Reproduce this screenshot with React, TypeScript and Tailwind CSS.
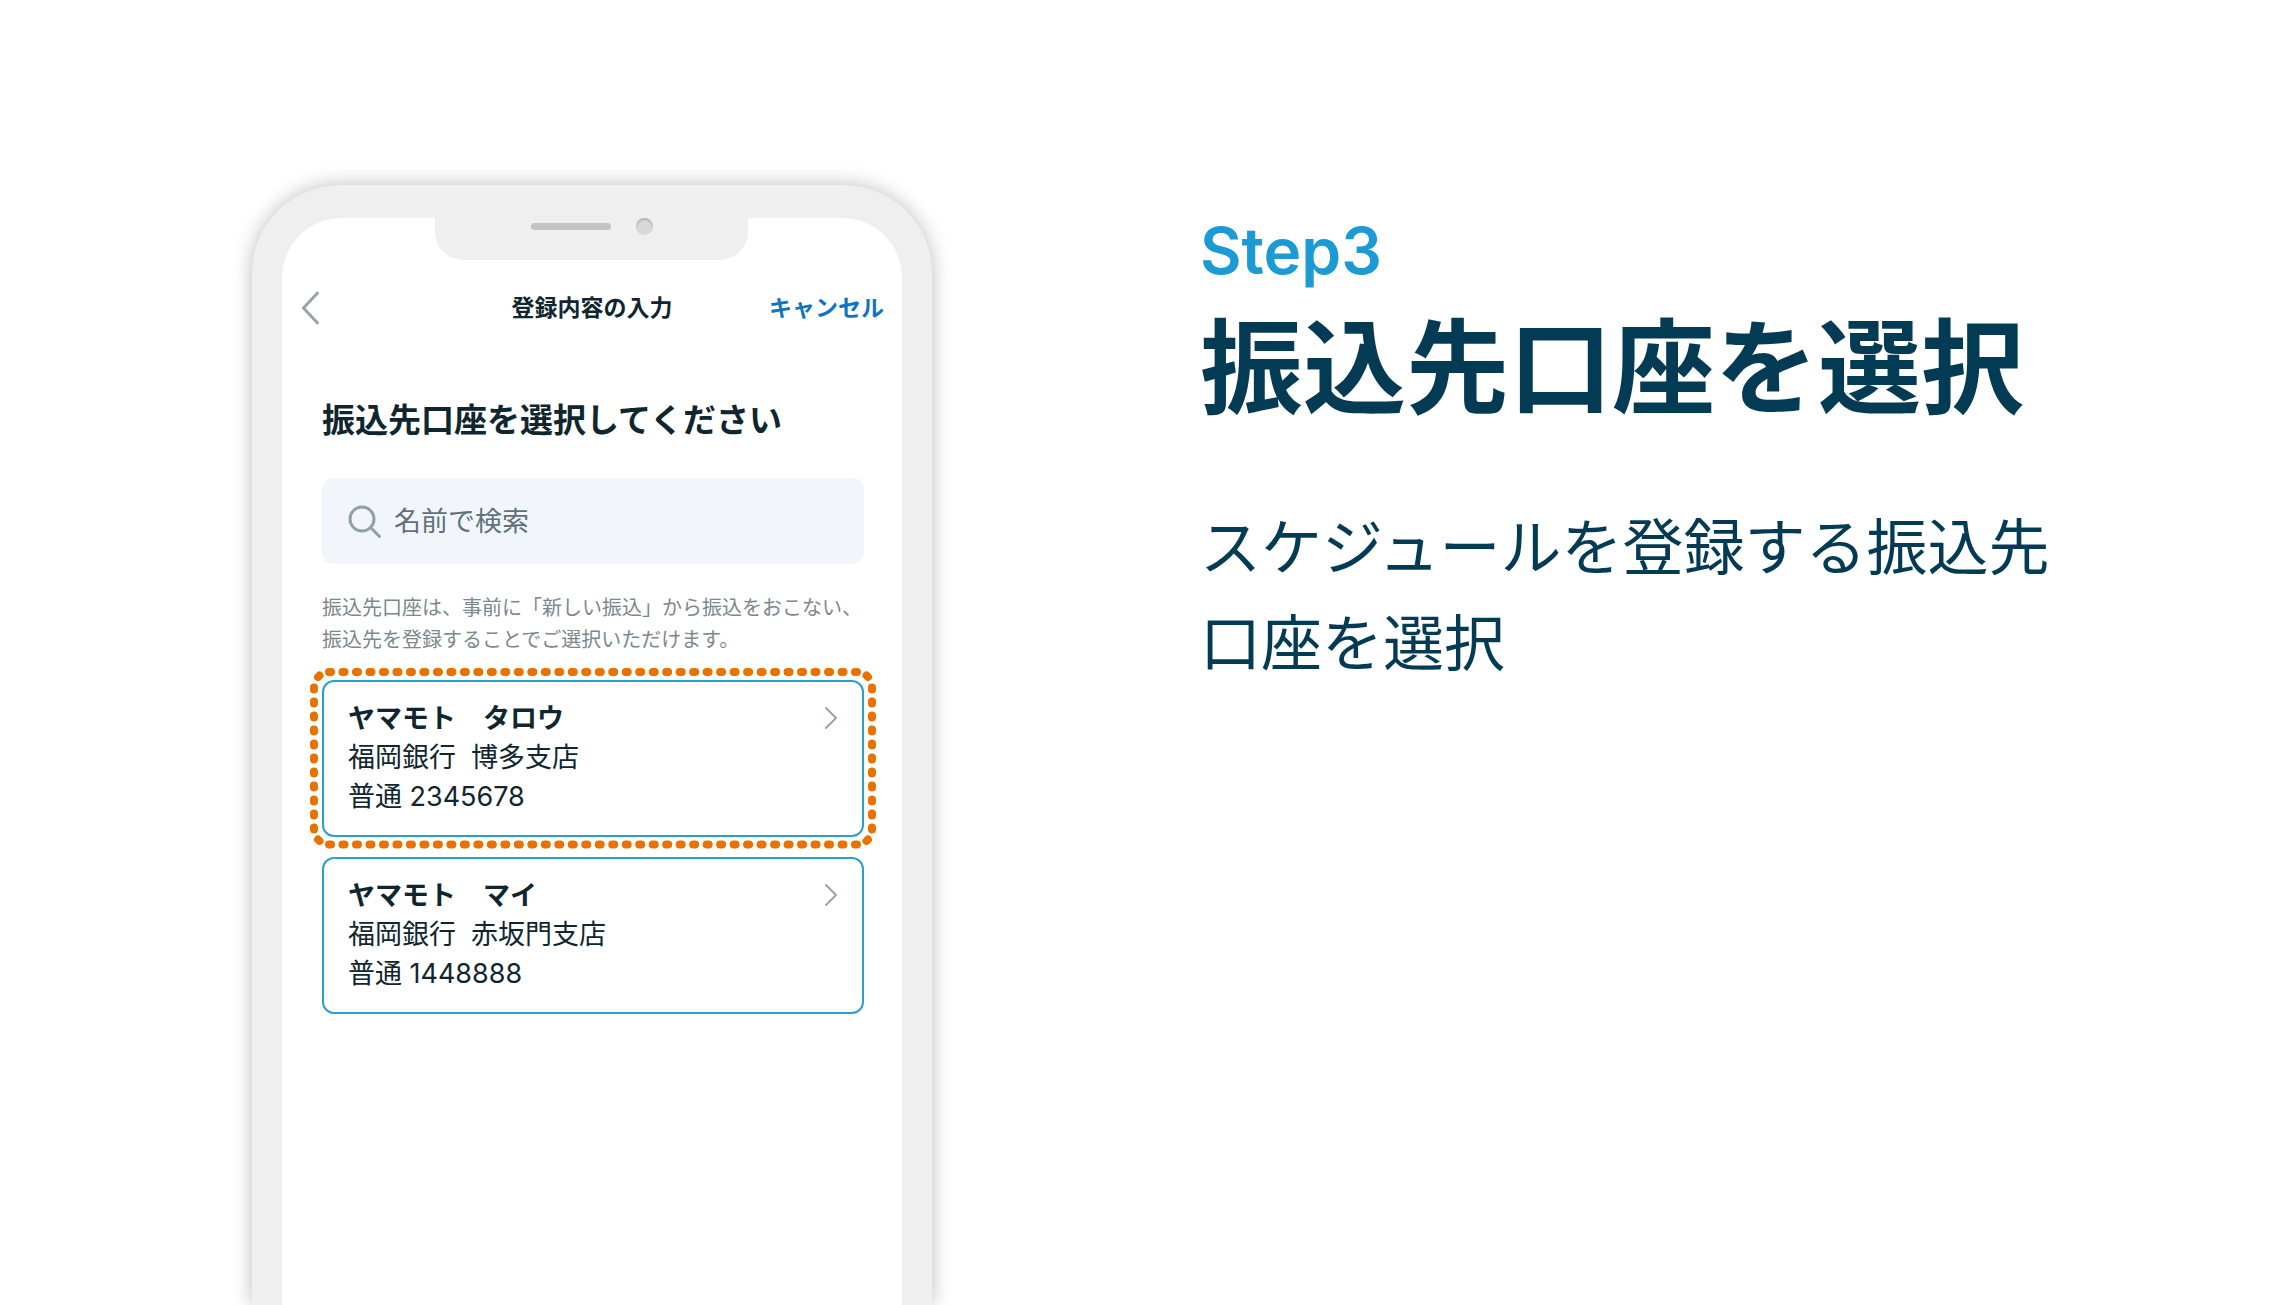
const accounts = [
  {
    id: 1,
    name: "ヤマモト　タロウ",
    bank: "福岡銀行",
    branch: "博多支店",
    number: "2345678",
    highlighted: true,
  },
  {
    id: 2,
    name: "ヤマモト　マイ",
    bank: "福岡銀行",
    branch: "赤坂門支店",
    number: "1448888",
    highlighted: false,
  },
];

const Highlight = () => (
  <svg
    className="pointer-events-none absolute -inset-x-[12px] -inset-y-[12px] h-[181px] w-[566px]"
    viewBox="0 0 566 181"
    fill="none"
    stroke="#e87200"
    strokeWidth="8"
    strokeLinecap="round"
  >
    <path d="M19 4H548" strokeDasharray="2 11.487" />
    <path d="M19 176.500H548" strokeDasharray="2 11.487" />
    <path d="M4 19.500V162" strokeDasharray="2 12" />
    <path d="M562 19.500V162" strokeDasharray="2 12" />
    <path d="M8 9L9.500 7.500M556.500 7.500L558 9M8 171.500L9.500 173M556.500 173L558 171.500" />
  </svg>
);

const AccountCard = ({ account }: { account: (typeof accounts)[number] }) => (
  <li className="relative">
    {account.highlighted && <Highlight />}
    <button
      type="button"
      className="flex w-full items-start justify-between rounded-xl border-2 border-[#2a9fd3] pt-[17px] pr-[24px] pb-[19px] pl-[24px] text-left text-[27px] leading-[39px]"
    >
      <span>
        <span className="block font-bold">{account.name}</span>
        <span className="block whitespace-pre">
          {account.bank}
          {"  "}
          {account.branch}
        </span>
        <span className="block">普通 {account.number}</span>
      </span>
      <svg
        className="mt-[7px] h-[24px] w-[14px]"
        viewBox="0 0 14 24"
        fill="none"
        stroke="#98a4ab"
        strokeWidth="2"
        strokeLinecap="round"
        strokeLinejoin="round"
      >
        <path d="M2 2L12 12L2 22" />
      </svg>
    </button>
  </li>
);

const Phone = () => (
  <div className="w-[680px] shrink-0 rounded-t-[88px] bg-[#efefef] px-[30px] pt-[33px] shadow-[0_0_20px_rgba(0,0,0,0.26)]">
    <div className="h-full rounded-t-[60px] bg-white text-[#10262f]">
      <div className="mx-auto flex h-[42px] w-[313px] justify-center rounded-b-[28px] bg-[#efefef]">
        <div className="flex h-[17px] items-center gap-[25px]">
          <span className="h-[7px] w-[80px] rounded-full bg-[#c4c4c4]" />
          <span className="size-[17px] rounded-full bg-[#d8d8d8] shadow-[inset_0_2px_2px_#b4b4b4]" />
        </div>
      </div>

      <header className="mt-[28px] grid grid-cols-[1fr_auto_1fr] items-center px-[18px] text-[23px] leading-[40px] font-bold">
        <button type="button" aria-label="戻る">
          <svg
            className="h-[36px] w-[20px]"
            viewBox="0 0 20 36"
            fill="none"
            stroke="#98a4ab"
            strokeWidth="3"
            strokeLinecap="round"
            strokeLinejoin="round"
          >
            <path d="M17.500 3L3.500 18L17.500 33" />
          </svg>
        </button>
        <h2>登録内容の入力</h2>
        <button type="button" className="text-right text-[#0f75c2]">
          キャンセル
        </button>
      </header>

      <div className="pr-[38px] pl-[40px]">
        <h3 className="mt-[68px] text-[33px] leading-[48px] font-bold">
          振込先口座を選択してください
        </h3>

        <label
          htmlFor="search"
          className="mt-[34px] flex h-[86px] items-center rounded-xl bg-[#f2f6fb] pl-[25px]"
        >
          <svg
            className="mr-[12px] size-[35px] shrink-0"
            viewBox="0 0 35 35"
            fill="none"
            stroke="#93a0a5"
            strokeWidth="3"
            strokeLinecap="round"
          >
            <circle cx="15" cy="15" r="12" />
            <path d="M23.500 23.500L32.500 32.500" />
          </svg>
          <input
            id="search"
            type="text"
            aria-label="名前で検索"
            placeholder="名前で検索"
            className="h-[84px] w-full bg-transparent text-[27px] outline-none placeholder:text-[#61717a]"
          />
        </label>

        <p className="mt-[28px] text-[20px] leading-[32px] text-[#7b888e]">
          振込先口座は、事前に「新しい振込」から振込をおこない、
          <br />
          振込先を登録することでご選択いただけます。
        </p>

        <ul className="mt-[24px] space-y-[20px]">
          {accounts.map((account) => (
            <AccountCard key={account.id} account={account} />
          ))}
        </ul>
      </div>
    </div>
  </div>
);

const App = () => {
  return (
    <main
      lang="ja"
      className="flex h-screen overflow-hidden bg-white pt-[185px] pl-[11vw] font-['Inter','Noto_Sans_CJK_JP',sans-serif]"
    >
      <Phone />
      <section className="ml-[268px] max-w-[880px] pt-[26px] text-[#043b54]">
        <p className="text-[64px] leading-[80px] font-semibold text-[#1b9ad4]">
          Step3
        </p>
        <h1 className="mt-[14px] text-[103px] leading-[128px] font-bold whitespace-nowrap">
          振込先口座を選択
        </h1>
        <p className="mt-[67px] text-[61px] leading-[96px]">
          スケジュールを登録する振込先口座を選択
        </p>
      </section>
    </main>
  );
};

export default App;
